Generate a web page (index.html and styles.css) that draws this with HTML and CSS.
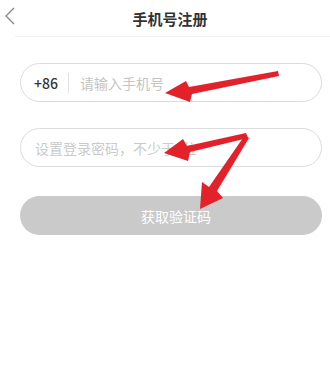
FILE: index.html
```html
<!DOCTYPE html>
<html lang="zh">
<head>
<meta charset="utf-8">
<link rel="stylesheet" href="styles.css">
</head>
<body>
<div class="page">
  <header class="header">
    <svg class="back" width="12" height="18" viewBox="0 0 12 18"><path d="M10 1 L2 9 L10 17" fill="none" stroke="#888" stroke-width="1.3"/></svg>
    <h1 class="title">手机号注册</h1>
  </header>
  <main class="form">
    <div class="field">
      <span class="code">+86</span>
      <span class="sep"></span>
      <span class="ph">请输入手机号</span>
    </div>
    <div class="field">
      <span class="ph pw">设置登录密码，不少于6位</span>
    </div>
    <div class="btn">获取验证码</div>
  </main>
  <svg class="arrows" width="330" height="386" viewBox="0 0 330 386">
    <polygon fill="#e3212a" points="165,93 186,81 189,87 278,71 279,76 192,94 190,102"/>
    <polygon fill="#e3212a" points="164,153 183,139 187,146 246,133 248,138 190,152 188,161"/>
    <polygon fill="#e3212a" points="245,135 249,138 217,191 223,198 200,209 202,182 209,187"/>
  </svg>
</div>
</body>
</html>
```
FILE: styles.css
```css
* { box-sizing: border-box; }
html, body { margin: 0; padding: 0; background: #fff; }
body { font-family: "Noto Sans CJK SC", "Noto Sans", sans-serif; }
.page { position: relative; width: 330px; height: 386px; overflow: hidden; }
.header { position: relative; height: 37px; display: flex; align-items: center; justify-content: center; }
.header::after { content: ""; position: absolute; left: 15px; right: 0; bottom: 0; height: 1px; background: #f2f2f2; }
.back { position: absolute; left: 4px; top: 7px; }
.title { margin: 0 0 0 10px; font-size: 15px; font-weight: bold; color: #333; line-height: 20px; }
.form { padding: 26px 8px 0 20px; display: flex; flex-direction: column; }
.field { height: 39px; border: 1px solid #dcdcdc; border-radius: 20px; display: flex; align-items: center; padding-left: 13px; margin-bottom: 26px; }
.code { font-size: 14px; color: #333; width: 34px; font-weight: 500; }
.sep { width: 1px; height: 20px; background: #e2e2e2; margin-right: 11px; }
.ph { font-size: 14px; color: #c4c4c4; }
.pw { padding-left: 1px; color: #cacaca; }
.btn { margin-top: 3px; height: 39px; border-radius: 20px; background: #cacaca; color: #fff; font-size: 14px; display: flex; align-items: center; justify-content: center; padding-left: 10px; }
.arrows { position: absolute; left: 0; top: 0; pointer-events: none; }
```
